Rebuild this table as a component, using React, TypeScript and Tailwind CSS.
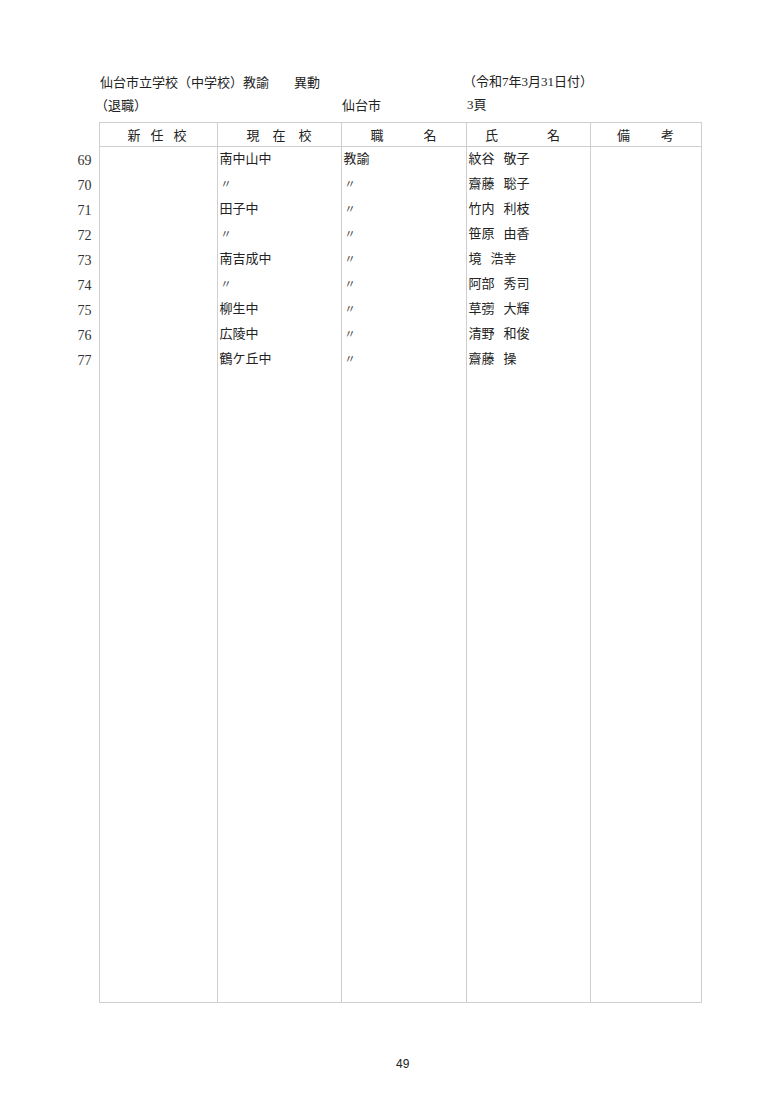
const rows = [
  { no: 69, school: "南中山中", job: "教諭", family: "紋谷", given: "敬子" },
  { no: 70, school: "〃", job: "〃", family: "齋藤", given: "聡子" },
  { no: 71, school: "田子中", job: "〃", family: "竹内", given: "利枝" },
  { no: 72, school: "〃", job: "〃", family: "笹原", given: "由香" },
  { no: 73, school: "南吉成中", job: "〃", family: "境", given: "浩幸" },
  { no: 74, school: "〃", job: "〃", family: "阿部", given: "秀司" },
  { no: 75, school: "柳生中", job: "〃", family: "草彅", given: "大輝" },
  { no: 76, school: "広陵中", job: "〃", family: "清野", given: "和俊" },
  { no: 77, school: "鶴ケ丘中", job: "〃", family: "齋藤", given: "操" },
]

const jp = "font-['Noto_Sans_CJK_JP',sans-serif]"
const serif = "font-['Liberation_Serif','Noto_Sans_CJK_JP',serif]"
const cell = "border border-[#cfcfcf] p-0 align-middle"
const side = "border-x border-[#cfcfcf] p-0"
const textCell = "border-x border-[#cfcfcf] p-0 pl-[2px] pb-[4px]"

function Ditto({ text }: { text: string }) {
  if (text === "〃") return <span className="text-[11px] text-[#444] pl-[1px]">〃</span>
  return <span>{text}</span>
}

export default function App() {
  return (
    <div className={`w-[780px] h-[1103px] bg-white text-[#222] text-[13px] leading-none ${jp} flex flex-col`}>
      {/* heading */}
      <div className="pt-[75px] h-[92px] flex flex-col">
        <div className="grid grid-cols-[100px_367px_auto] h-[17px] items-center">
          <div />
          <div className="flex">
            <span>仙台市立学校（中学校）教諭</span>
            <span className="ml-[25px]">異動</span>
          </div>
          <span className={`${serif} -ml-[4px]`}>（令和7年3月31日付）</span>
        </div>
        <div className="grid grid-cols-[95px_247px_125px_auto] h-[17px] items-center mt-[10px]">
          <div />
          <span>（退職）</span>
          <span>仙台市</span>
          <span className={serif}>3頁</span>
        </div>
      </div>

      {/* table */}
      <div className="mt-[30px] pl-[59px]">
        <table className="table-fixed border-collapse">
          <colgroup>
            <col className="w-[40px]" />
            <col className="w-[118px]" />
            <col className="w-[124px]" />
            <col className="w-[125px]" />
            <col className="w-[124px]" />
            <col className="w-[111px]" />
          </colgroup>
          <thead>
            <tr className="h-[24px]">
              <th className="p-0" />
              <th className={`${cell} font-normal`}>
                <div className="flex justify-center gap-[10px] pr-[2px]"><span>新</span><span>任</span><span>校</span></div>
              </th>
              <th className={`${cell} font-normal`}>
                <div className="flex justify-center gap-[13px]"><span>現</span><span>在</span><span>校</span></div>
              </th>
              <th className={`${cell} font-normal`}>
                <div className="flex justify-center gap-[40px]"><span>職</span><span>名</span></div>
              </th>
              <th className={`${cell} font-normal`}>
                <div className="flex justify-center gap-[49px] pr-[11px]"><span>氏</span><span>名</span></div>
              </th>
              <th className={`${cell} font-normal`}>
                <div className="flex justify-center gap-[31px]"><span>備</span><span>考</span></div>
              </th>
            </tr>
          </thead>
          <tbody>
            {rows.map((r) => (
              <tr key={r.no} className="h-[25.1px]">
                <td className={`p-0 pr-[7px] pt-[3px] text-right ${serif} text-[14px] text-[#333]`}>{r.no}</td>
                <td className={side} />
                <td className={textCell}><Ditto text={r.school} /></td>
                <td className={textCell}><Ditto text={r.job} /></td>
                <td className={textCell}>
                  <div className="flex gap-[9px]"><span>{r.family}</span><span>{r.given}</span></div>
                </td>
                <td className={side} />
              </tr>
            ))}
            <tr className="h-[630px]">
              <td className="p-0" />
              <td className={`${side} border-b`} />
              <td className={`${side} border-b`} />
              <td className={`${side} border-b`} />
              <td className={`${side} border-b`} />
              <td className={`${side} border-b`} />
            </tr>
          </tbody>
        </table>
      </div>

      {/* page number */}
      <div className="mt-[55px] pl-[396px] font-['Liberation_Sans',sans-serif] text-[12px] leading-none">49</div>
    </div>
  )
}
